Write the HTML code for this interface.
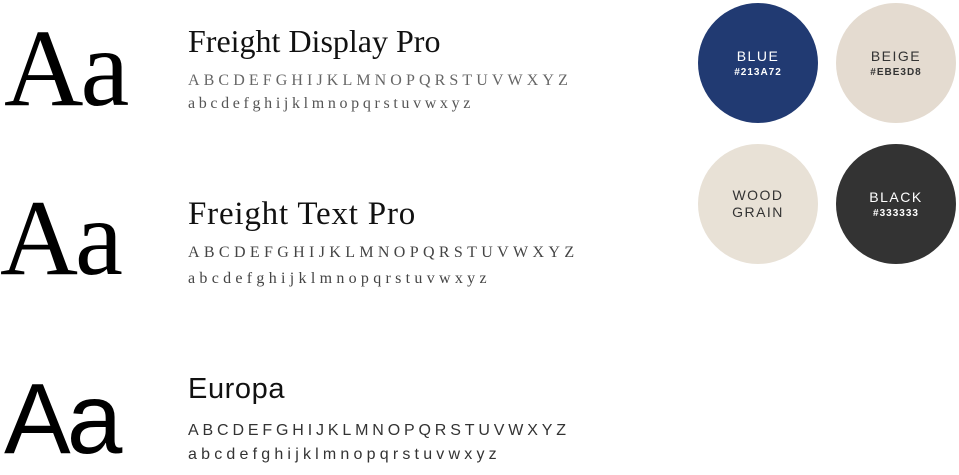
<!DOCTYPE html>
<html><head><meta charset="utf-8"><style>
body{margin:0;width:959px;height:466px;background:#fff;position:relative;overflow:hidden}
.t{position:absolute;line-height:1;white-space:nowrap;margin:0}
.s{font-family:"Liberation Serif",serif}
.n{font-family:"Liberation Sans",sans-serif}
.c{position:absolute;width:120px;height:120px;border-radius:50%;display:flex;flex-direction:column;align-items:center;justify-content:center;font-family:"Liberation Sans",sans-serif;text-align:center}
.c b{font-weight:normal;font-size:14px;letter-spacing:1.5px;line-height:17px}
.c i{font-style:normal;font-weight:bold;font-size:10px;letter-spacing:1px;margin-top:2px}
</style></head><body>
<div class="t s" style="left:4px;top:13px;font-size:110px;letter-spacing:-3px">Aa</div>
<div class="t s" style="left:188px;top:25px;font-size:32px;color:#111">Freight Display Pro</div>
<div class="t s" style="left:188px;top:73px;font-size:16px;letter-spacing:4.1px;color:#666">ABCDEFGHIJKLMNOPQRSTUVWXYZ</div>
<div class="t s" style="left:188px;top:96px;font-size:16px;letter-spacing:3.65px;color:#555">abcdefghijklmnopqrstuvwxyz</div>

<div class="t s" style="left:0px;top:185px;font-size:108px;letter-spacing:-3px">Aa</div>
<div class="t s" style="left:188px;top:198px;font-size:33px;letter-spacing:0.8px;color:#111">Freight Text Pro</div>
<div class="t s" style="left:188px;top:245px;font-size:16px;letter-spacing:4.35px;color:#444">ABCDEFGHIJKLMNOPQRSTUVWXYZ</div>
<div class="t s" style="left:188px;top:271px;font-size:16px;letter-spacing:4.3px;color:#444">abcdefghijklmnopqrstuvwxyz</div>

<div class="t n" style="left:4px;top:369px;font-size:100px;letter-spacing:-4px">Aa</div>
<div class="t n" style="left:188px;top:375px;font-size:29px;letter-spacing:0.6px;color:#111">Europa</div>
<div class="t n" style="left:188px;top:423px;font-size:16px;letter-spacing:3.85px;color:#333">ABCDEFGHIJKLMNOPQRSTUVWXYZ</div>
<div class="t n" style="left:188px;top:447px;font-size:16px;letter-spacing:4.2px;color:#333">abcdefghijklmnopqrstuvwxyz</div>

<div class="c" style="left:698px;top:3px;background:#213a72;color:#fff"><b>BLUE</b><i>#213A72</i></div>
<div class="c" style="left:836px;top:3px;background:#e4dbd0;color:#333"><b>BEIGE</b><i>#EBE3D8</i></div>
<div class="c" style="left:698px;top:144px;background:#e8e1d6;color:#333"><b>WOOD</b><b>GRAIN</b></div>
<div class="c" style="left:836px;top:144px;background:#333;color:#fff"><b>BLACK</b><i>#333333</i></div>
</body></html>
